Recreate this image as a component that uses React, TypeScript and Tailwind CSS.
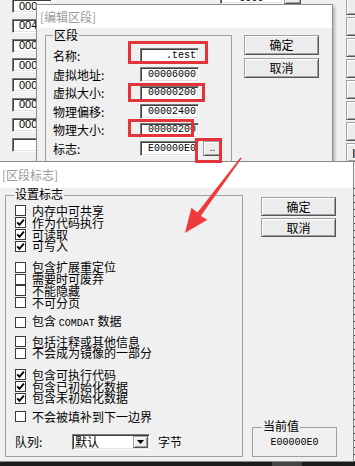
import React from "react";

const sunken =
  "bg-white border border-t-[#7a7a7a] border-l-[#7a7a7a] border-b-white border-r-white shadow-[inset_1px_1px_0_#404040,inset_-1px_-1px_0_#e3e3e3]";
const raised =
  "bg-[#ececec] border border-t-[#a0a0a0] border-l-[#a0a0a0] border-b-[#555] border-r-[#555] shadow-[inset_1px_1px_0_#fff,inset_-1px_-1px_0_#a0a0a0]";

function Check({ checked }: { checked?: boolean }) {
  return (
    <span className="w-[11px] h-[11px] shrink-0 border border-[#3a3a3a] bg-white flex items-center justify-center">
      {checked && (
        <svg width="9" height="9" viewBox="0 0 9 9">
          <path d="M1.2 4.3 L3.5 6.8 L7.9 1.6" stroke="#000" strokeWidth="1.9" fill="none" />
        </svg>
      )}
    </span>
  );
}

function Row({ checked, children }: { checked?: boolean; children: React.ReactNode }) {
  return (
    <div className="flex items-center h-[11.8px] gap-[6px] shrink-0">
      <Check checked={checked} />
      <span className="leading-[12px] whitespace-nowrap">{children}</span>
    </div>
  );
}

function Btn({ children, className }: { children: React.ReactNode; className: string }) {
  return (
    <div className={`${raised} ${className} flex items-center justify-center leading-[12px]`}>{children}</div>
  );
}

export default function App() {
  const fields: [string, string][] = [
    ["名称:", ".test"],
    ["虚拟地址:", "00006000"],
    ["虚拟大小:", "00000200"],
    ["物理偏移:", "00002400"],
    ["物理大小:", "00000200"],
    ["标志:", "E00000E0"],
  ];
  const bgRows = ["000", "004", "000", "000", "000", "000", "000", ""];
  return (
    <div className="relative w-[355px] h-[466px] overflow-hidden bg-[#f0f0f0] font-['Noto_Sans_CJK_SC',sans-serif] text-[12px] text-black">
      {/* background window */}
      <div className="absolute left-[12px] top-[-1px] flex flex-col gap-[5.8px]">
        {bgRows.map((t, i) => (
          <div
            key={i}
            className={`${sunken} w-[40px] h-[14px] pl-[6px] flex items-center font-['Liberation_Sans',sans-serif] text-[11px] leading-[11px]`}
          >
            {t}
          </div>
        ))}
      </div>
      <div className="absolute left-[220px] top-[-12px] flex gap-[1px]">
        <div className={`${sunken} w-[63px] h-[16px] flex items-end justify-center font-['Liberation_Sans',sans-serif] text-[11px] leading-[11px]`}>
          0000
        </div>
        <div className={`${raised} w-[17px] h-[16px]`} />
      </div>
      <div className="absolute left-[346px] top-[-4px] flex flex-col gap-[2px]">
        {[0, 1, 2, 3, 4, 5, 6, 7].map((i) => (
          <div key={i} className={`${raised} w-[20px] h-[19px] pl-[5px] flex items-center`}>
            {i === 7 ? "I" : ""}
          </div>
        ))}
      </div>

      {/* dialog 1 */}
      <div className="absolute left-[36px] top-[4px] w-[297px] h-[162px] border border-[#8f8f8f] flex flex-col shadow-[2px_2px_3px_rgba(0,0,0,0.25)]">
        <div className="h-[23px] shrink-0 bg-white text-[#9a9a9a] pl-[3px] flex items-center leading-[12px]">[编辑区段]</div>
        <div className="flex-1 min-h-0 overflow-hidden bg-[#f0f0f0] flex pt-[7px] pl-[8px]">
          <div className="relative shrink-0 w-[187px] h-[140px] border border-[#a0a0a0] pt-[10.7px] pl-[7px]">
            <span className="absolute left-[7px] top-[-7px] px-[1px] bg-[#f0f0f0] leading-[12px]">区段</span>
            {fields.map(([l, v], i) => (
              <div key={i} className="grid grid-cols-[83px_59px_19px] gap-x-[4px] items-center h-[18.6px]">
                <span className="leading-[12px] whitespace-nowrap">{l}</span>
                <div
                  className={`${sunken} h-[15px] flex items-center justify-end pr-[2px] font-['Liberation_Mono',monospace] text-[10px] leading-[10px]`}
                >
                  {v}
                </div>
                {i === 5 ? (
                  <div className={`${raised} h-[15px] flex items-end justify-center pb-[3px] text-[10px] leading-[8px] font-['Liberation_Sans',sans-serif]`}>
                    ..
                  </div>
                ) : (
                  <span />
                )}
              </div>
            ))}
          </div>
          <div className="ml-[12px] flex flex-col gap-[3px]">
            <Btn className="w-[75px] h-[20px]">确定</Btn>
            <Btn className="w-[75px] h-[20px]">取消</Btn>
          </div>
        </div>
      </div>

      {/* dialog 2 */}
      <div className="absolute left-[-2px] top-[161px] w-[356px] h-[301px] border border-[#8a8a8a] flex flex-col">
        <div className="h-[26px] shrink-0 bg-white text-[#9a9a9a] pl-[3px] flex items-center leading-[12px]">[区段标志]</div>
        <div className="flex-1 min-h-0 bg-[#f0f0f0] flex pt-[7px] pb-[4px] pl-[6px]">
          <div className="relative w-[238px] border border-[#a0a0a0] pt-[9px] pl-[9px] flex flex-col">
            <span className="absolute left-[8px] top-[-8px] px-[1px] bg-[#f0f0f0] leading-[12px]">设置标志</span>
            <Row>内存中可共享</Row>
            <Row checked>作为代码执行</Row>
            <Row checked>可读取</Row>
            <Row checked>可写入</Row>
            <div className="mt-[9.3px]" />
            <Row>包含扩展重定位</Row>
            <Row>需要时可废弃</Row>
            <Row>不能隐藏</Row>
            <Row>不可分页</Row>
            <div className="mt-[8.3px]" />
            <Row>
              包含 <span className="font-['Liberation_Mono',monospace] text-[10px]">COMDAT</span> 数据
            </Row>
            <div className="mt-[6.9px]" />
            <Row>包括注释或其他信息</Row>
            <Row>不会成为镜像的一部分</Row>
            <div className="mt-[9.7px]" />
            <Row checked>包含可执行代码</Row>
            <Row checked>包含已初始化数据</Row>
            <Row checked>包含未初始化数据</Row>
            <div className="mt-[6.3px]" />
            <Row>不会被填补到下一边界</Row>
            <div className="mt-[11.4px] flex items-center h-[16px] shrink-0">
              <span className="w-[57px] leading-[12px]">队列:</span>
              <div className={`${sunken} w-[78px] h-[16px] flex items-center justify-between pl-[2px] pr-[1px]`}>
                <span className="leading-[12px]">默认</span>
                <div className={`${raised} w-[15px] h-[12px] flex items-center justify-center`}>
                  <svg width="7" height="4" viewBox="0 0 7 4">
                    <path d="M0 0 H7 L3.5 4 Z" fill="#000" />
                  </svg>
                </div>
              </div>
              <span className="ml-[8px] leading-[12px]">字节</span>
            </div>
          </div>
          <div className="ml-[9px] w-[85px] flex flex-col">
            <div className="mt-[2px] ml-[9px] flex flex-col gap-[2px]">
              <Btn className="w-[75px] h-[19px]">确定</Btn>
              <Btn className="w-[75px] h-[19px]">取消</Btn>
            </div>
            <div className="mt-auto relative h-[30px] border border-[#a0a0a0] flex items-center justify-center">
              <span className="absolute left-[9px] top-[-8px] px-[1px] bg-[#f0f0f0] leading-[12px]">当前值</span>
              <span className="font-['Liberation_Mono',monospace] text-[10px] leading-[10px] mt-[2px]">E00000E0</span>
            </div>
          </div>
        </div>
      </div>
      <div className="absolute left-[354px] top-[188px] w-[1px] h-[274px] bg-[repeating-linear-gradient(to_bottom,#333_0px,#333_1px,transparent_1px,transparent_7px)]" />
      <div className="absolute left-0 top-[462px] w-[355px] h-[4px] bg-[#1c1c1c] flex">
        <div className="ml-[272px] w-[30px] bg-[#444]" />
      </div>

      {/* annotations */}
      <div className="absolute left-[128px] top-[41px] w-[80px] h-[23px] border-[3px] border-[#e3343b]" />
      <div className="absolute left-[128px] top-[83px] w-[77px] h-[19px] border-[3px] border-[#e3343b]" />
      <div className="absolute left-[128px] top-[119px] w-[66px] h-[18px] border-[3px] border-[#e3343b]" />
      <div className="absolute left-[195px] top-[138px] w-[27px] h-[25px] border-[3px] border-[#e3343b]" />
      <svg className="absolute left-0 top-0 pointer-events-none" width="355" height="466">
        <polygon
          points="240.4,157.5 241.6,158.5 200.8,216 207.4,219.8 185,233 191.4,207.8 197.4,212.6"
          fill="#ee3a3a"
        />
      </svg>
    </div>
  );
}
